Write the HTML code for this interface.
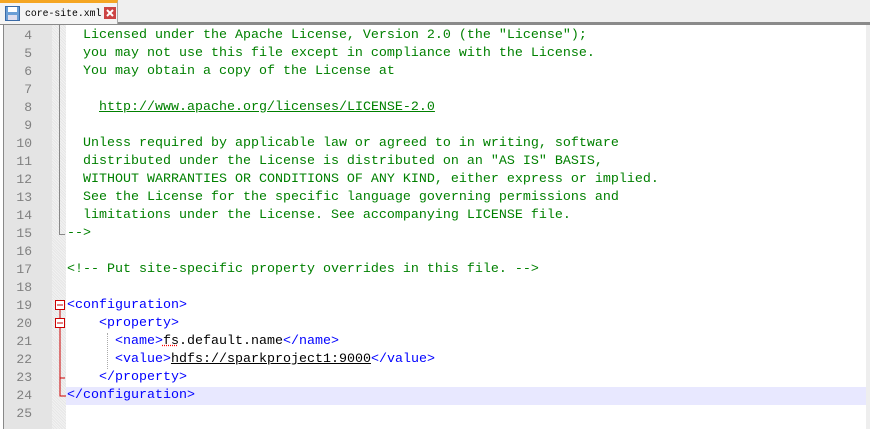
<!DOCTYPE html>
<html><head><style>
body{margin:0;width:870px;height:429px;overflow:hidden;background:#fff;position:relative;font-family:"Liberation Mono",monospace;}
.tabbar{position:absolute;left:0;top:0;width:870px;height:22px;background:#efefef;border-bottom:3px solid #8a8a8a;}
.tab{position:absolute;left:0;top:0;width:118px;height:24px;background:#f4f4f4;border-top:3px solid #f5a623;box-sizing:border-box;border-right:1px solid #aaa;font-size:9.8px;white-space:nowrap;}
.tab span{position:absolute;left:25px;top:5px;font-family:"Liberation Mono",monospace;}
.num{position:absolute;left:3px;top:25px;width:49px;height:404px;background:#e4e4e4;border-left:1px solid #888;}
.fold{position:absolute;left:52px;top:25px;width:14px;height:404px;background:repeating-linear-gradient(45deg,#f2f2f2 0 1px,#e6e6e6 1px 2px);}
.ln{position:absolute;left:0;width:32px;text-align:right;color:#808080;font-size:13px;height:18px;line-height:18px;font-family:"Liberation Mono",monospace;}
.l{position:absolute;left:67px;height:18px;line-height:18px;font-size:13.33px;white-space:pre;font-family:"Liberation Mono",monospace;}
.l *{font-family:"Liberation Mono",monospace;}
.c{color:#008000}.t{color:#0000ff}.k{color:#000}
</style></head><body>
<div class="tabbar"></div>
<div class="tab">
<svg style="position:absolute;left:5px;top:3px" width="15" height="15"><rect x="0.5" y="0.5" width="14" height="14" fill="#6a9ed6" stroke="#3a6aa6"/><rect x="3" y="1" width="9" height="5" fill="#fff"/><rect x="3" y="9" width="9" height="5" fill="#dde"/></svg>
<span>core-site.xml</span>
<svg style="position:absolute;left:104px;top:4px" width="12" height="12"><rect width="12" height="12" fill="#c44"/><path d="M3 3L9 9M9 3L3 9" stroke="#fff" stroke-width="2"/></svg>
</div>
<div class="num"></div>
<div class="fold"></div>
<div style="position:absolute;left:66px;top:387px;width:800px;height:18px;background:#e8e8ff"></div>
<div style="position:absolute;left:866px;top:25px;width:4px;height:404px;background:#eee"></div>
<div style="position:absolute;left:59px;top:25px;width:1px;height:209px;background:#888"></div>
<div style="position:absolute;left:59px;top:234px;width:6px;height:1px;background:#888"></div>
<svg style="position:absolute;left:52px;top:297px" width="15" height="110">
<rect x="3.5" y="3.5" width="9" height="9" fill="#fff" stroke="#c00"/><path d="M5 8H11" stroke="#c00"/>
<rect x="3.5" y="21.5" width="9" height="9" fill="#fff" stroke="#c00"/><path d="M5 26H11" stroke="#c00"/>
<path d="M8 13V21M8 31V99H14M8 81H13" stroke="#c00" fill="none"/>
</svg>
<div style="position:absolute;left:107px;top:333px;width:0;height:36px;border-left:1px dotted #aaa"></div>
<div id="g"></div>
<script>
var L=[
['4','<span class="c">  Licensed under the Apache License, Version 2.0 (the "License");</span>'],
['5','<span class="c">  you may not use this file except in compliance with the License.</span>'],
['6','<span class="c">  You may obtain a copy of the License at</span>'],
['7',''],
['8','<span class="c">    <u>http://www.apache.org/licenses/LICENSE-2.0</u></span>'],
['9',''],
['10','<span class="c">  Unless required by applicable law or agreed to in writing, software</span>'],
['11','<span class="c">  distributed under the License is distributed on an "AS IS" BASIS,</span>'],
['12','<span class="c">  WITHOUT WARRANTIES OR CONDITIONS OF ANY KIND, either express or implied.</span>'],
['13','<span class="c">  See the License for the specific language governing permissions and</span>'],
['14','<span class="c">  limitations under the License. See accompanying LICENSE file.</span>'],
['15','<span class="c">--&gt;</span>'],
['16',''],
['17','<span class="c">&lt;!-- Put site-specific property overrides in this file. --&gt;</span>'],
['18',''],
['19','<span class="t">&lt;configuration&gt;</span>'],
['20','<span class="t">    &lt;property&gt;</span>'],
['21','<span class="t">      &lt;name&gt;</span><span class="k"><span style="text-decoration:underline dotted red">fs</span>.default.name</span><span class="t">&lt;/name&gt;</span>'],
['22','<span class="t">      &lt;value&gt;</span><span class="k"><u>hdfs://sparkproject1:9000</u></span><span class="t">&lt;/value&gt;</span>'],
['23','<span class="t">    &lt;/property&gt;</span>'],
['24','<span class="t">&lt;/configuration&gt;</span>'],
['25','']];
var h='';
L.forEach(function(r,i){var t=27+i*18;h+='<div class="ln" style="top:'+t+'px">'+r[0]+'</div><div class="l" style="top:'+t+'px">'+r[1]+'</div>';});
document.getElementById('g').innerHTML=h;
</script>
</body></html>
